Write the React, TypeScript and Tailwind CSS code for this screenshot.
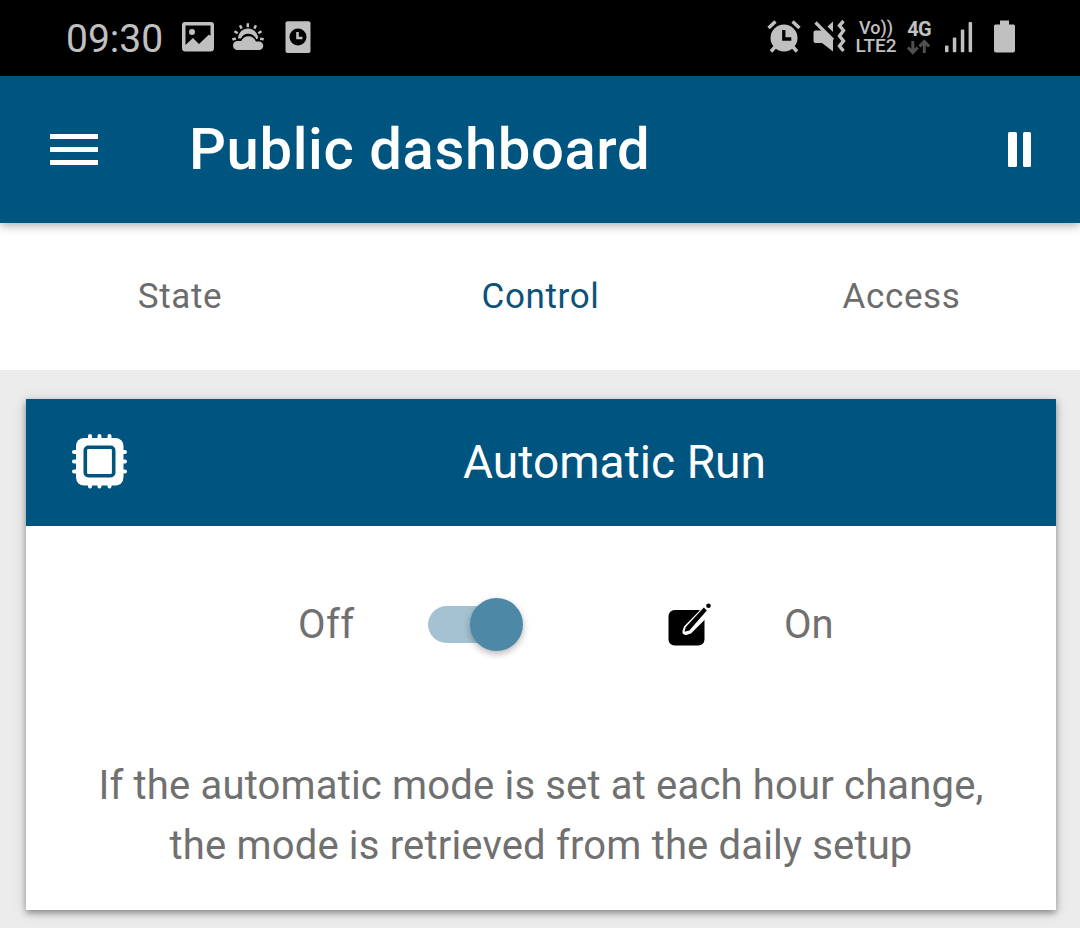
import type { ReactNode } from "react";

function Glyph({ box, className, children }: { box: string; className: string; children: ReactNode }) {
  return (
    <svg viewBox={box} className={`block shrink-0 ${className}`} fill="currentColor" aria-hidden="true">
      {children}
    </svg>
  );
}

function StatusBar() {
  return (
    <div className="flex h-[76px] items-start bg-black pl-[66px] text-[#c0c0c0]">
      <span className="mt-[16px] w-[96px] whitespace-nowrap text-[39px] leading-[46px]">09:30</span>
      <Glyph box="180 16 36 40" className="ml-[18px] mt-[16px] h-[40px] w-[36px]">
        <path fillRule="evenodd" d="M185 22h26a3 3 0 0 1 3 3v23a3.500 3.500 0 0 1-3.500 3.500h-25a3.500 3.500 0 0 1-3.500-3.500V25a3 3 0 0 1 3-3ZM185.500 25.500V45l7.500-7 6 6 10-9.500 1.500 1.500V25.500ZM192 29a3 3 0 1 1 0 6 3 3 0 0 1 0-6Z" />
      </Glyph>
      <Glyph box="230 16 36 40" className="ml-[14px] mt-[16px] h-[40px] w-[36px]">
        <path d="M238 38.500c.5-6.500 5-10 10-10s9.500 3.500 10.300 9.500l-1.800 1.500c-1.500-3.800-4.500-5.800-8.300-5.800-3.500 0-5.800 1.600-7.200 4.800Z" />
        <path d="M237.500 50a4.500 4.500 0 0 1 0-9h3.800c1.300-3 3.800-4.800 7-4.800 3.800 0 6.400 2 7.600 5.300H259a4.250 4.250 0 0 1 0 8.500Z" />
        <path d="M247.800 23.300v4M240 25.300l1.700 3.300M256 25.300l-1.700 3.300M234.500 31.300l3.200 2M261.500 31.300l-3.200 2M232.300 39.300l3.600-.6M263.700 39.300l-3.600-.6" fill="none" stroke="currentColor" strokeWidth="2.500" />
      </Glyph>
      <Glyph box="282 16 32 40" className="ml-[16px] mt-[16px] h-[40px] w-[32px]">
        <rect x="285.500" y="21.300" width="25" height="31.700" rx="2" />
        <circle cx="298" cy="37" r="8.500" fill="#000" />
        <path d="M297.500 32v6h5" fill="none" stroke="currentColor" strokeWidth="2.600" />
      </Glyph>

      <Glyph box="766 16 36 40" className="ml-[452px] mt-[16px] h-[40px] w-[36px]">
        <circle cx="784" cy="38" r="13.500" />
        <path d="m768.500 28 7-6.500M799.500 28l-7-6.500M775 47l-4 4.500M793 47l4 4.500" stroke="currentColor" strokeWidth="3.500" />
        <path d="M783.800 30v9h7.500" fill="none" stroke="#000" strokeWidth="3.300" />
      </Glyph>
      <Glyph box="812 16 36 40" className="ml-[10px] mt-[16px] h-[40px] w-[36px]">
        <path d="M815.500 30.500h6l11.500 9v12L822 43h-6.500a2 2 0 0 1-2-2v-8.500a2 2 0 0 1 2-2Z" />
        <path d="M833 21.500v10.500l-5.500-5.500Z" />
        <path d="m815.500 22.500 17.500 17.500" stroke="currentColor" strokeWidth="3.200" />
        <path d="m843.500 21-4 4.500 4 5-4 5.500 4 5-4 5 4 5" fill="none" stroke="currentColor" strokeWidth="3.400" />
      </Glyph>
      <div className="ml-[7px] mt-[19px] flex w-[42px] flex-col items-center font-medium">
        <span className="whitespace-nowrap text-[18px] leading-[18px]">Vo))</span>
        <span className="text-[19px] leading-[18px]">LTE2</span>
      </div>
      <div className="ml-[9px] mt-[20px] flex w-[26px] flex-col items-center">
        <span className="text-[20px] font-bold leading-[18px] tracking-[-0.8px]">4G</span>
        <Glyph box="906 38 26 18" className="h-[18px] w-[26px] text-[#505050]">
          <path d="M912.800 41v11M908 47.500l4.800 5 4.800-5M924.300 53V42M919.500 46.500l4.800-5 4.800 5" fill="none" stroke="currentColor" strokeWidth="3" />
        </Glyph>
      </div>
      <Glyph box="943 16 32 40" className="ml-[11px] mt-[16px] h-[40px] w-[32px]">
        <rect x="945" y="45.500" width="3.500" height="6.700" rx="1" />
        <rect x="952.800" y="37.500" width="3.500" height="14.700" rx="1" />
        <rect x="960.800" y="29.500" width="3.500" height="22.700" rx="1" />
        <rect x="968.600" y="22" width="3.500" height="30.200" rx="1" />
      </Glyph>
      <Glyph box="992 16 26 40" className="ml-[17px] mt-[16px] h-[40px] w-[26px]">
        <path d="M1000 20.500h9v4h4.500a1.500 1.500 0 0 1 1.500 1.500v24.500a2 2 0 0 1-2 2h-17a2 2 0 0 1-2-2V26a1.500 1.500 0 0 1 1.500-1.500h4.500Z" />
      </Glyph>
    </div>
  );
}

function AppBar() {
  return (
    <header className="relative z-10 flex h-[147px] items-center bg-[#005480] pl-[50px] pr-[49px] text-white shadow-[0_3px_9px_rgba(0,0,0,0.3)]">
      <button aria-label="Menu" className="flex w-[48px] flex-col gap-[8px]">
        <span className="h-[5.300px] bg-white" />
        <span className="h-[5.300px] bg-white" />
        <span className="h-[5.300px] bg-white" />
      </button>
      <h1 className="mb-[2px] ml-[91px] whitespace-nowrap text-[58px] font-medium leading-[68px] tracking-[0.6px]">Public dashboard</h1>
      <button aria-label="Pause" className="ml-auto flex gap-[6px]">
        <span className="h-[35px] w-[8.500px] rounded-[1.500px] bg-white" />
        <span className="h-[35px] w-[8.500px] rounded-[1.500px] bg-white" />
      </button>
    </header>
  );
}

function Tabs() {
  return (
    <nav className="grid h-[147px] grid-cols-3 items-center bg-white text-center text-[35px] leading-[42px] tracking-[0.650px] text-[#6c6c6c]">
      <button>State</button>
      <button className="pl-px text-[#0b527b]">Control</button>
      <button className="pl-[3px]">Access</button>
    </nav>
  );
}

function ChipIcon() {
  return (
    <Glyph box="70 432 60 60" className="h-[60px] w-[60px]">
      <rect x="76" y="439" width="47.500" height="47.500" rx="8" />
      <path d="M90 437v4M99.500 437v4M109.500 437v4M90 484v3.500M99.500 484v3.500M109.500 484v3.500M74 453h4M74 462.500h4M74 472.500h4M122 453h3M122 462.500h3M122 472.500h3" stroke="currentColor" strokeWidth="4" strokeLinecap="round" />
      <rect x="85.300" y="448.300" width="28.400" height="28.400" rx="3" fill="none" stroke="#005480" strokeWidth="3.600" />
    </Glyph>
  );
}

function EditIcon() {
  return (
    <Glyph box="666 600 48 48" className="h-[48px] w-[48px] text-black">
      <rect x="668.500" y="610" width="36" height="35.500" rx="6" />
      <path d="m708 607-21 21.500-1 3 3-1 20-20Z" fill="#fff" stroke="#fff" strokeWidth="7" strokeLinejoin="round" />
      <path d="m703.800 607.500-18 19.500-1.300 4.800 4.800-1.300 17.500-20Z" />
      <circle cx="708.500" cy="605.700" r="2.300" />
    </Glyph>
  );
}

export default function App() {
  return (
    <div className="flex h-[928px] w-[1080px] flex-col overflow-hidden bg-[#ececec] font-['Roboto',sans-serif]">
      <StatusBar />
      <AppBar />
      <Tabs />
      <main className="pl-[26px] pr-[24px] pt-[29px]">
        <section className="h-[511px] bg-white shadow-[0_3px_6px_rgba(0,0,0,0.35),0_2px_14px_rgba(0,0,0,0.14)]">
          <div className="flex h-[127px] items-start bg-[#005480] pl-[44px] pt-[32px] text-white">
            <ChipIcon />
            <h2 className="ml-[333px] mt-[4px] whitespace-nowrap text-[46px] leading-[54px] tracking-[0.060px]">Automatic Run</h2>
          </div>
          <div className="flex h-[196px] items-center pl-[272px] text-[40px] leading-[48px] text-[#707070]">
            <span className="w-[130px] pt-[2px] tracking-[0.4px]">Off</span>
            <button role="switch" aria-checked="true" aria-label="Automatic mode" className="flex h-[37px] w-[95px] items-center rounded-full bg-gradient-to-r from-[#a5c2d2] from-70% to-transparent to-70%">
              <span className="ml-auto h-[53px] w-[53px] shrink-0 rounded-full bg-[#4d88a6] shadow-[0_3px_7px_rgba(0,0,0,0.28)]" />
            </button>
            <span className="ml-[143px]"><EditIcon /></span>
            <span className="ml-[70px] pt-[2px]">On</span>
          </div>
          <p className="mt-[34px] text-center text-[40px] leading-[60px] tracking-[0.170px] text-[#707070]">
            If the automatic mode is set at each hour change,
            <br />
            the mode is retrieved from the daily setup
          </p>
        </section>
      </main>
    </div>
  );
}
